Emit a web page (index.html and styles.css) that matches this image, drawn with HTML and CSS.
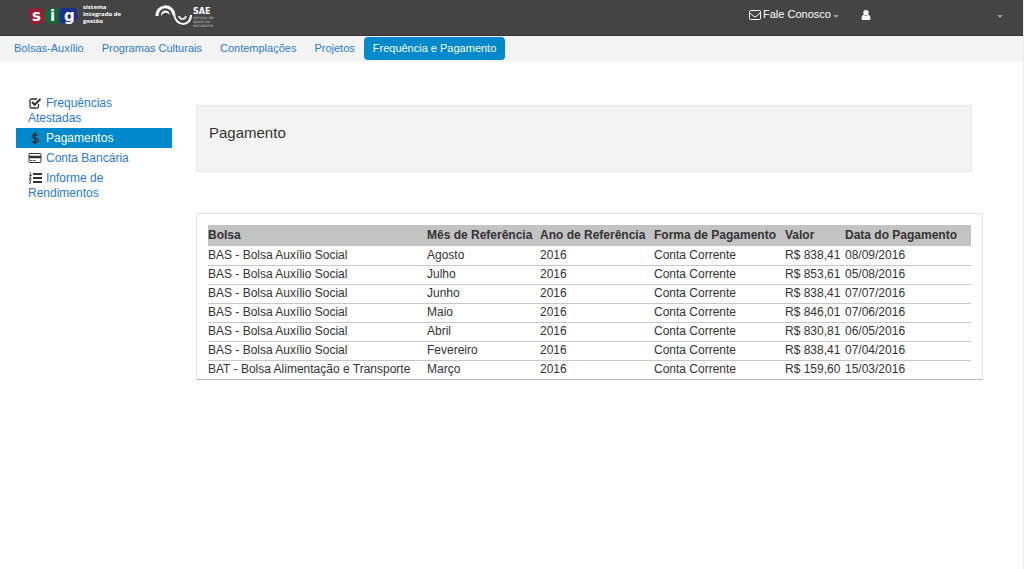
FILE: index.html
```html
<!DOCTYPE html>
<html lang="pt-BR">
<head>
<meta charset="utf-8">
<meta name="viewport" content="width=device-width, initial-scale=1">
<title>SIG - Pagamento</title>
<link rel="stylesheet" href="styles.css">
</head>
<body>
<header class="topbar">
  <a class="brand" href="#">
    <svg class="brand-mark" viewBox="0 0 50 24" aria-hidden="true">
      <path fill="#9c1c35" d="M0 6 6 4l10 1 2 11-5 3-9 2-2-8z"/>
      <path fill="#17663a" d="m17 6 13-3 3 12-5 5-10-1-2-7z"/>
      <path fill="#1b2f8f" d="m33 4 15 0 2 9-5 7-13-1-1-8z"/>
      <text class="mark-letter" x="4" y="17">s</text>
      <text class="mark-letter" x="22" y="17">i</text>
      <text class="mark-letter" x="36" y="17">g</text>
    </svg>
    <span class="brand-name">sistema<br>integrado de<br>gestão</span>
  </a>
  <a class="sae" href="#">
    <svg class="sae-mark" viewBox="0 0 38 22" aria-hidden="true" fill="none">
      <path stroke="#fff" stroke-width="3" d="M2 12C2 0 18 0 19 11"/>
      <path fill="#fff" d="M6 12c0-7 8-7 9-1-3-3-6-3-9 1z"/>
      <path stroke="#fff" stroke-width="2" d="M19 10c1 13 17 13 17 1"/>
      <path stroke="#ddd" stroke-width="2" d="M24 12c1 4 6 4 7 0"/>
    </svg>
    <span class="sae-name"><strong>SAE</strong><small>serviço de<br>apoio ao<br>estudante</small></span>
  </a>
  <div class="account">
    <button class="menu contact" type="button">
      <svg class="mail" viewBox="0 0 12 10" aria-hidden="true" fill="none" stroke="#fff"><rect x=".5" y=".5" width="11" height="9" rx="1"/><path d="m1 3 4 3.500q1 .7 2 0L11 3"/></svg>
      <span>Fale Conosco</span><span class="caret"></span>
    </button>
    <button class="menu user" type="button" aria-label="Usuário">
      <svg class="person" viewBox="0 0 10 10" aria-hidden="true" fill="#fff"><circle cx="5" cy="2.700" r="2.700"/><path d="M2.300 4.800Q5 7 7.700 4.800 9.500 5.500 9.500 8.500 9.500 10 8 10H2Q.5 10 .5 8.500.5 5.500 2.300 4.800Z"/></svg>
      <span class="caret"></span>
    </button>
  </div>
</header>
<nav class="tabs" aria-label="Principal">
  <a href="#">Bolsas-Auxílio</a>
  <a href="#">Programas Culturais</a>
  <a href="#">Contemplações</a>
  <a href="#">Projetos</a>
  <a class="active" href="#" aria-current="page">Frequência e Pagamento</a>
</nav>
<div class="page">
  <nav class="side" aria-label="Frequência e Pagamento">
    <a href="#"><svg class="icon" viewBox="0 0 14 12" aria-hidden="true" fill="none" stroke="#333"><path stroke-width="1.300" d="M10.500 7v2.500q0 1.500-1.500 1.500H3.500Q2 11 2 9.500v-6Q2 2 3.500 2H9"/><path stroke-width="2" d="m4 5 2.700 2.800L12.500 2"/></svg>Frequências Atestadas</a>
    <a class="active" href="#" aria-current="page"><svg class="icon" viewBox="0 0 14 12" aria-hidden="true" fill="none" stroke="#333"><path stroke-width="1.500" d="M10 3.500Q7 1.500 5 3t1 3l2 .5q3 1 1.500 3T4 9.500M7 0v12"/></svg>Pagamentos</a>
    <a href="#"><svg class="icon" viewBox="0 0 14 12" aria-hidden="true" fill="none" stroke="#333"><rect x="1" y="1.500" width="12" height="9" rx="1"/><path stroke-width="2.500" d="M1 5h12"/><path d="M2.500 8.500h2M5.500 8.500h2"/></svg>Conta Bancária</a>
    <a href="#"><svg class="icon" viewBox="0 0 14 12" aria-hidden="true" fill="none" stroke="#333"><path stroke-width="2" d="M5 2h9M5 6h9M5 10h9"/><path stroke-width=".8" d="M1.500 1h1v2.500M1 3.500h3M1 5h2v1L1 7.500h2.500M1 9h2l-1 1q2 .5 0 1.500H1"/></svg>Informe de Rendimentos</a>
  </nav>
  <main class="content">
    <section class="heading"><h1>Pagamento</h1></section>
    <section class="panel">
      <table>
        <colgroup><col class="c-bolsa"><col class="c-mes"><col class="c-ano"><col class="c-forma"><col class="c-valor"><col></colgroup>
        <thead><tr><th>Bolsa</th><th>Mês de Referência</th><th>Ano de Referência</th><th>Forma de Pagamento</th><th>Valor</th><th>Data do Pagamento</th></tr></thead>
        <tbody>
          <tr><td>BAS - Bolsa Auxílio Social</td><td>Agosto</td><td>2016</td><td>Conta Corrente</td><td>R$ 838,41</td><td>08/09/2016</td></tr>
          <tr><td>BAS - Bolsa Auxílio Social</td><td>Julho</td><td>2016</td><td>Conta Corrente</td><td>R$ 853,61</td><td>05/08/2016</td></tr>
          <tr><td>BAS - Bolsa Auxílio Social</td><td>Junho</td><td>2016</td><td>Conta Corrente</td><td>R$ 838,41</td><td>07/07/2016</td></tr>
          <tr><td>BAS - Bolsa Auxílio Social</td><td>Maio</td><td>2016</td><td>Conta Corrente</td><td>R$ 846,01</td><td>07/06/2016</td></tr>
          <tr><td>BAS - Bolsa Auxílio Social</td><td>Abril</td><td>2016</td><td>Conta Corrente</td><td>R$ 830,81</td><td>06/05/2016</td></tr>
          <tr><td>BAS - Bolsa Auxílio Social</td><td>Fevereiro</td><td>2016</td><td>Conta Corrente</td><td>R$ 838,41</td><td>07/04/2016</td></tr>
          <tr><td>BAT - Bolsa Alimentação e Transporte</td><td>Março</td><td>2016</td><td>Conta Corrente</td><td>R$ 159,60</td><td>15/03/2016</td></tr>
        </tbody>
      </table>
    </section>
  </main>
</div>
</body>
</html>
```
FILE: styles.css
```css
* { box-sizing: border-box; }
body {
  margin: 0;
  min-height: 100vh;
  border-right: 1px solid #eee;
  background: #fff;
  color: #333;
  font: 12px/15px "Liberation Sans", Arial, sans-serif;
}
a { color: #2a7ad5; text-decoration: none; }

.topbar {
  display: flex;
  align-items: flex-start;
  height: 36px;
  padding: 4px 20px 0 28px;
  background: #444;
  border-bottom: 1px solid #333;
}
.brand, .sae { display: flex; color: #fff; }
.brand { gap: 5px; }
.brand-mark { width: 50px; height: 24px; overflow: visible; }
.mark-letter { fill: #fff; font: bold 15px "DejaVu Sans", sans-serif; }
.brand-name { flex: 0 0 38px; font: bold 6px/7px "Open Sans", sans-serif; white-space: nowrap; }
.sae { margin-left: 34px; }
.sae-mark { width: 38px; height: 22px; }
.sae-name { padding-top: 4px; }
.sae-name strong, .sae-name small { display: block; }
.sae-name strong { font: bold 8px/8px "DejaVu Sans", sans-serif; }
.sae-name small { color: #bbb; font: 4px/4px "DejaVu Sans", sans-serif; }
.account { display: flex; flex: 0 0 254px; margin-left: auto; padding-top: 3px; }
.menu {
  display: flex;
  align-items: center;
  padding: 0;
  border: 0;
  background: none;
  color: #fff;
  font: 11px/15px "Liberation Sans", Arial, sans-serif;
}
.contact { gap: 2px; }
.user { flex: 1; justify-content: space-between; margin-left: 22px; }
.mail { width: 12px; height: 10px; }
.person { width: 10px; height: 10px; }
.caret {
  margin-top: 3px;
  border: 3px solid transparent;
  border-top-color: #999;
  border-bottom: 0;
}

.tabs {
  display: flex;
  padding: 1px 5px 2px;
  background: #f4f4f4;
}
.tabs a { padding: 4px 9px; border-radius: 4px; font-size: 11px; }
.tabs .active, .side .active { background: #08c; color: #fff; }

.page { display: flex; gap: 24px; padding: 31px 40px 0 16px; }
.side { flex: 0 0 156px; }
.side a { display: block; padding: 3px 24px 2px 12px; }
.icon { width: 14px; height: 12px; margin-right: 4px; vertical-align: -2px; }
.content { flex: 1; min-width: 0; padding-top: 12px; }
.heading {
  height: 67px;
  margin-right: 11px;
  padding: 17px 12px;
  border: 1px solid #eaeaea;
  background: #f4f4f4;
}
h1 { margin: 0; font-size: 15px; font-weight: normal; line-height: 20px; }
.panel {
  margin-top: 41px;
  padding: 11px 11px 0;
  border: 1px solid #e5e5e5;
  border-bottom-color: #bbb;
}
table { width: 100%; border-collapse: collapse; table-layout: fixed; }
th, td { padding: 0; text-align: left; white-space: nowrap; }
th { height: 21px; background: #c3c3c3; }
td { height: 19px; border-bottom: 1px solid #c8c8c8; }
tbody tr:last-child td { border-bottom: 0; }
.c-bolsa { width: 219px; }
.c-mes { width: 113px; }
.c-ano { width: 114px; }
.c-forma { width: 131px; }
.c-valor { width: 60px; }
```
